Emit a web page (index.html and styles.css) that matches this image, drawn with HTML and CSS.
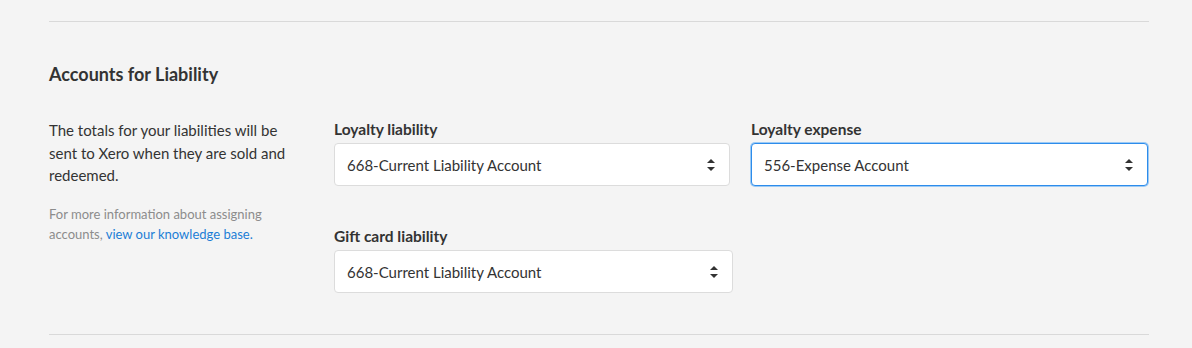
FILE: index.html
```html
<!DOCTYPE html>
<html>
<head>
<meta name="viewport" content="width=device-width, initial-scale=1">
<link rel="stylesheet" href="styles.css">
</head>
<body>
<div class="section">
  <h3 class="section-title">Accounts for Liability</h3>
  <div class="section-body">
    <div class="intro">
      <p class="intro-text">The totals for your liabilities will be sent to Xero when they are sold and redeemed.</p>
      <p class="intro-note">For more information about assigning accounts, <a href="#">view our knowledge base.</a></p>
    </div>
    <div class="fields">
      <div class="field">
        <label for="loyalty-liability">Loyalty liability</label>
        <div class="select">
          <span>668-Current Liability Account</span>
          <svg class="arrows" width="10" height="16" viewBox="0 0 10 16"><path d="M1 6 L5 2 L9 6 Z M1 10 L5 14 L9 10 Z" fill="#333"/></svg>
        </div>
      </div>
      <div class="field">
        <label for="loyalty-expense">Loyalty expense</label>
        <div class="select focused">
          <span>556-Expense Account</span>
          <svg class="arrows" width="10" height="16" viewBox="0 0 10 16"><path d="M1 6 L5 2 L9 6 Z M1 10 L5 14 L9 10 Z" fill="#333"/></svg>
        </div>
      </div>
      <div class="field wide">
        <label for="gift-card">Gift card liability</label>
        <div class="select">
          <span>668-Current Liability Account</span>
          <svg class="arrows" width="10" height="16" viewBox="0 0 10 16"><path d="M1 6 L5 2 L9 6 Z M1 10 L5 14 L9 10 Z" fill="#333"/></svg>
        </div>
      </div>
    </div>
  </div>
</div>
</body>
</html>
```

FILE: styles.css
```css
body {
  margin: 0;
  background: #f4f4f4;
  color: #333333;
  font-family: Lato, "Open Sans", sans-serif;
  font-size: 15px;
}

.section {
  margin: 21px 43px 0 49px;
  border-top: 1px solid #d9d9d9;
  border-bottom: 1px solid #d9d9d9;
  padding-bottom: 41px;
}

.section-title {
  margin: 41px 0 0 0;
  font-size: 18px;
  font-weight: bold;
  line-height: 22px;
}

.section-body {
  display: flex;
  margin-top: 34px;
}

.intro {
  width: 240px;
  margin-right: 45px;
}

.intro-text {
  margin: 0;
  line-height: 22.5px;
}

.intro-note {
  margin: 17px 0 0 0;
  color: #8c8c8c;
  font-size: 13px;
  line-height: 20px;
}

.intro-note a {
  color: #1c7ed6;
  text-decoration: none;
}

.fields {
  flex: 1;
  display: grid;
  grid-template-columns: 396px 397px;
  column-gap: 21px;
  row-gap: 40px;
}

.field label {
  display: block;
  font-weight: bold;
  font-size: 15.5px;
  line-height: 20px;
  margin-bottom: 4px;
}

.select {
  display: flex;
  align-items: center;
  justify-content: space-between;
  height: 43px;
  box-sizing: border-box;
  padding: 0 13px 0 12px;
  background: #ffffff;
  border: 1px solid #dcdcdc;
  border-radius: 4px;
}

.select.focused {
  border-color: #2d8ceb;
  box-shadow: 0 0 0 1px #9ccaf5;
}

.field.wide .select {
  width: 399px;
}
```
